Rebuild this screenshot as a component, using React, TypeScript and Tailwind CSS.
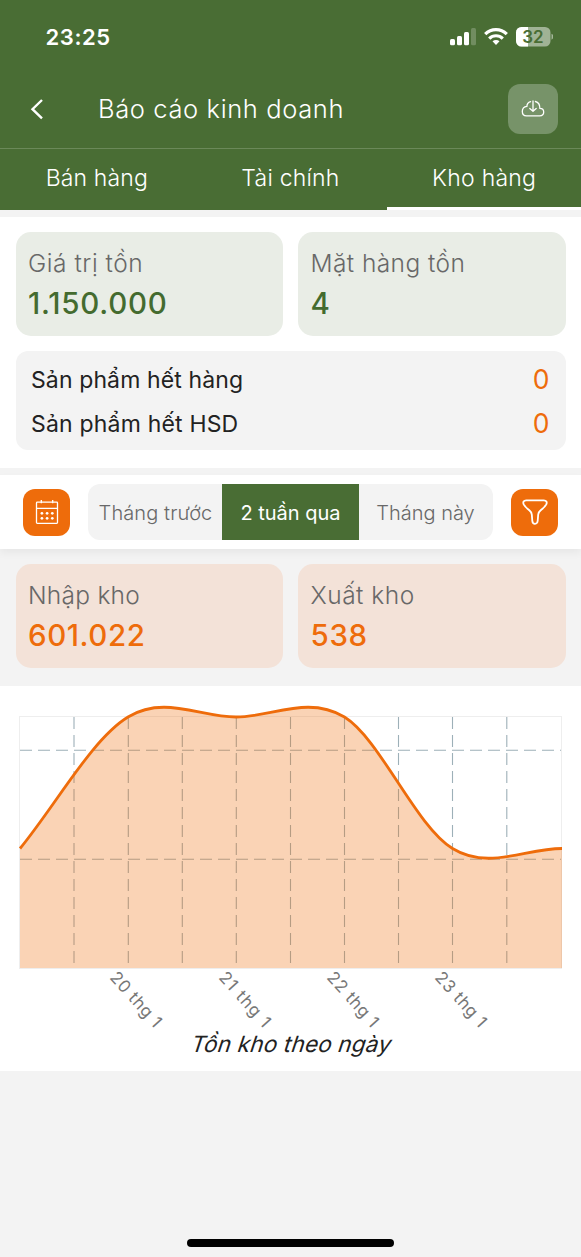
import React from "react";

/* A single text run fitted to a known width, so that labels keep their proportions. */
function Label({ text, size, width, weight = 300, className = "" }: {
  text: string; size: number; width: number; weight?: number; className?: string;
}) {
  const ref = React.useRef<HTMLSpanElement>(null);
  const [spacing, setSpacing] = React.useState(0);
  React.useLayoutEffect(() => {
    const el = ref.current;
    if (!el) return;
    el.style.letterSpacing = "0px";
    const natural = el.offsetWidth;
    const next = (width - natural) / Math.max(1, text.length);
    el.style.letterSpacing = next + "px";
    setSpacing(next);
  }, [text, size, width]);
  return (
    <span
      ref={ref}
      className={"inline-block whitespace-nowrap " + className}
      style={{ fontSize: size, fontWeight: weight, letterSpacing: spacing }}
    >
      {text}
    </span>
  );
}

function StatusBar() {
  return (
    <div className="flex h-[74px] items-center justify-between pl-[45.5px] pr-[28px]">
      <Label text="23:25" size={22} width={65} weight={600} />
      <svg width="104" height="24" viewBox="449 25 104 24" fill="#fff">
        <rect x="450" y="39" width="5" height="6.3" rx="1.5" />
        <rect x="457" y="36" width="5" height="9.3" rx="1.5" />
        <rect x="464" y="32" width="5" height="13.3" rx="1.5" />
        <rect x="471" y="28" width="5" height="17.3" rx="1.5" opacity=".22" />
        <g fill="none" stroke="#fff" strokeWidth="3.2">
          <path d="M485.2 34.2c6.1-6.1 15.4-6.1 21.6 0" />
          <path d="M489.2 38.6c3.9-3.8 9.7-3.8 13.6 0" />
        </g>
        <path d="M496 45l-3.5-3.7c2-1.8 5-1.8 7 0z" />
        <rect x="516" y="27" width="34.5" height="19.5" rx="5.5" opacity=".48" />
        <path d="M528 27h-6.5a5.5 5.5 0 0 0-5.5 5.5V41a5.5 5.5 0 0 0 5.5 5.5h6.5z" />
        <path d="M551.5 33.7c2.5 1 2.5 5.1 0 6z" opacity=".5" />
        <text x="533" y="43" textAnchor="middle" fontSize="17" fontWeight="600" fill="#496d34">32</text>
      </svg>
    </div>
  );
}

function Header() {
  return (
    <div className="flex h-[74px] items-center pl-[30px] pr-[23px] pb-[4px]">
      <svg width="14" height="22" viewBox="0 0 14 22" fill="none" stroke="#fff" strokeWidth="2.4">
        <path d="M12 2L2.5 11.2l9.5 9.1" />
      </svg>
      <Label text="Báo cáo kinh doanh" size={25.5} width={246} className="ml-[54px] pt-px" />
      <button className="ml-auto flex h-[50px] w-[50px] items-center justify-center rounded-[12px] bg-[#779369]">
        <svg width="24" height="18" viewBox="0 0 24 18" fill="none" stroke="#fff" strokeWidth="1.3" strokeLinecap="round" strokeLinejoin="round">
          <path d="M9.6 1.6C7.2 2.3 5.9 4 5.9 6.4 3.2 6.6 1.3 8.6 1.3 11.6c0 2.6 1.8 4.3 4.2 4.3h13.2c2.4 0 4-1.5 4-3.8 0-2.1-1.4-3.7-3.8-3.7 0-3.3-1.3-6.1-4.5-6.9" />
          <path d="M12 .9v10.2M8.8 8.4l3.2 2.9 3.2-2.9" />
        </svg>
      </button>
    </div>
  );
}

function Tabs() {
  const tabs = [
    { text: "Bán hàng", width: 102 },
    { text: "Tài chính", width: 98 },
    { text: "Kho hàng", width: 104 },
  ];
  return (
    <div className="grid h-[62px] grid-cols-3 border-t border-[#6b8959]">
      {tabs.map((t, i) => (
        <div
          key={t.text}
          className={"flex items-center justify-center " + (i === 2 ? "border-b-[3px] border-white" : "pb-[3px]")}
        >
          <Label text={t.text} size={23} width={t.width} />
        </div>
      ))}
    </div>
  );
}

function StatCard({ title, titleWidth, value, valueWidth, tone }: {
  title: string; titleWidth: number; value: string; valueWidth: number; tone: "green" | "orange";
}) {
  const colors = tone === "green" ? "bg-[#e9ede6] text-[#446b2f]" : "bg-[#f3e2d8] text-[#ee6c0b]";
  return (
    <div className={"flex h-[104px] flex-col rounded-[15px] pl-[12.5px] pt-[13px] " + colors}>
      <Label text={title} size={24.5} width={titleWidth} className="h-[36px] self-start leading-[36px] text-[#686868]" />
      <Label text={value} size={29.5} width={valueWidth} weight={500} className="h-[44px] self-start leading-[44px]" />
    </div>
  );
}

function OutOfStock() {
  const rows = [
    { text: "Sản phẩm hết hàng", width: 212 },
    { text: "Sản phẩm hết HSD", width: 207 },
  ];
  return (
    <div className="mx-[15.5px] mt-[15px] h-[99px] rounded-[12px] bg-[#f3f3f3] pl-[15.5px] pr-[17px] pt-[7px]">
      {rows.map((r) => (
        <div key={r.text} className="flex h-[44px] items-center justify-between text-[#222]">
          <Label text={r.text} size={23} width={r.width} weight={400} />
          <Label text="0" size={26.5} width={16} weight={400} className="text-[#ee6c0b]" />
        </div>
      ))}
    </div>
  );
}

function CalendarIcon() {
  return (
    <svg width="24" height="26" viewBox="0 0 24 26" fill="none" stroke="#fff" strokeWidth="1.3">
      <rect x="1.5" y="3.1" width="21" height="21.2" rx=".8" />
      <path d="M1.5 9.3h21M6.3 1v3.2M17.7 1v3.2" />
      <g fill="#fff" stroke="none">
        {[14.3, 19.3].map((y) => [6.9, 12.1, 17.3].map((x) => <circle key={x + "-" + y} cx={x} cy={y} r="1.35" />))}
      </g>
    </svg>
  );
}

function FunnelIcon() {
  return (
    <svg width="26" height="26" viewBox="0 0 26 26" fill="none" stroke="#fff" strokeWidth="1.8" strokeLinejoin="round">
      <path d="M4.2 1.3h17.6c2.6 0 3.5 1.9 2.5 4-1.2 2.3-3.4 4.2-5.6 6-1.7 1.4-2.3 2.5-2.5 4.3l-.5 6.2c-.2 2-.9 3-2.7 3s-2.5-1-2.7-3l-.5-6.2c-.2-1.8-.8-2.9-2.5-4.3-2.2-1.8-4.4-3.7-5.6-6-1-2.1-.1-4 2.5-4z" />
    </svg>
  );
}

function RangeFilter() {
  return (
    <div className="relative z-10 flex h-[74px] items-center bg-white pl-[23px] pr-[23px] shadow-[0_4px_8px_rgba(0,0,0,0.05)]">
      <button className="flex h-[47px] w-[47px] items-center justify-center rounded-[12px] bg-[#ee6c0b]">
        <CalendarIcon />
      </button>
      <div className="ml-[18px] flex h-[56px] w-[405px] overflow-hidden rounded-[12px] bg-[#f3f3f3] text-[#686868]">
        <div className="flex w-[134px] items-center justify-center pl-px pt-[2px]"><Label text="Tháng trước" size={20} width={114} /></div>
        <div className="flex w-[137px] items-center justify-center bg-[#496d34] pt-[2px] text-white"><Label text="2 tuần qua" size={20} width={100} weight={400} /></div>
        <div className="flex w-[134px] items-center justify-center pr-px pt-[2px]"><Label text="Tháng này" size={20} width={98} /></div>
      </div>
      <button className="ml-auto flex h-[47px] w-[47px] items-center justify-center rounded-[12px] bg-[#ee6c0b] pb-px">
        <FunnelIcon />
      </button>
    </div>
  );
}

const curve =
  "M20 848.5C56 804.7 92 738.9 128 717C164 695.1 200 717 236 717C272 717 308 695.1 344.5 717C380 738.9 416 826.6 452.5 848.5C488 870.4 525 848.5 562 848.5";

function StockChart() {
  const ticks = [
    { x: 109, text: "20 thg 1" },
    { x: 218, text: "21 thg 1" },
    { x: 326, text: "22 thg 1" },
    { x: 434, text: "23 thg 1" },
  ];
  return (
    <section className="h-[385px] bg-white">
      <svg width="581" height="343" viewBox="0 686 581 343" className="block overflow-visible">
        <rect x="19.5" y="716.5" width="542" height="252" fill="none" stroke="#eee" />
        <g stroke="#9db0b8" strokeWidth="1.1" strokeDasharray="12 6">
          {[74, 128.3, 182.3, 236.3, 290.5, 344.5, 398.5, 452.5, 506.8].map((x) => (
            <line key={x} x1={x} x2={x} y1="717" y2="968" />
          ))}
          <line x1="20" x2="561" y1="750.2" y2="750.2" />
          <line x1="20" x2="561" y1="859.2" y2="859.2" />
        </g>
        <path d={curve + "V968H20Z"} fill="#ee6c0b" fillOpacity=".3" />
        <path d={curve} fill="none" stroke="#ee6c0b" strokeWidth="2.8" />
        {ticks.map((t) => (
          <text
            key={t.x}
            transform={"translate(" + t.x + " 978) rotate(48)"}
            fontSize="17"
            textLength="68"
            fill="#777"
          >
            {t.text}
          </text>
        ))}
      </svg>
      <div className="flex h-[30px] items-center justify-center pl-[3px] text-[#222]">
        <Label text="Tồn kho theo ngày" size={22.5} width={200} weight={400} className="-skew-x-[18deg]" />
      </div>
    </section>
  );
}

export default function App() {
  return (
    <main className="flex h-[1257px] w-[581px] flex-col overflow-hidden bg-[#f3f3f3] font-['Inter',sans-serif]">
      <header className="h-[210px] bg-[#496d34] text-white">
        <StatusBar />
        <Header />
        <Tabs />
      </header>
      <section className="mt-[7px] h-[251px] bg-white pt-[15px]">
        <div className="grid grid-cols-2 gap-[15px] px-[15.5px]">
          <StatCard title="Giá trị tồn" titleWidth={115} value="1.150.000" valueWidth={140} tone="green" />
          <StatCard title="Mặt hàng tồn" titleWidth={155} value="4" valueWidth={18} tone="green" />
        </div>
        <OutOfStock />
      </section>
      <div className="h-[7px] shrink-0" />
      <RangeFilter />
      <section className="grid h-[137px] grid-cols-2 gap-[15px] px-[15.5px] pt-[15px]">
        <StatCard title="Nhập kho" titleWidth={112} value="601.022" valueWidth={117} tone="orange" />
        <StatCard title="Xuất kho" titleWidth={104} value="538" valueWidth={57} tone="orange" />
      </section>
      <StockChart />
      <footer className="mt-auto flex h-[18px] items-start justify-center">
        <div className="h-[8px] w-[207px] rounded-full bg-black" />
      </footer>
    </main>
  );
}
